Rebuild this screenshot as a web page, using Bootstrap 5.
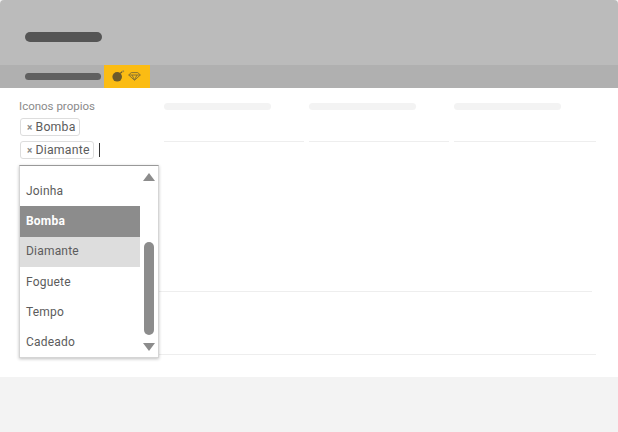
<!DOCTYPE html>
<html lang="es">
<head>
  <meta charset="UTF-8">
  <title>Iconos propios</title>
  <link href="https://cdn.jsdelivr.net/npm/bootstrap@5.3.0/dist/css/bootstrap.min.css" rel="stylesheet">
  <style>
    html, body { height: 100%; }
    body { background: #f3f3f3; font-family: Roboto, "Liberation Sans", sans-serif; font-size: 12px; color: #5c5c5c; overflow: hidden; }
    .page { width: 618px; height: 432px; }
    .top-band { height: 65px; background: #bbb; border-radius: 4px 4px 0 0; padding: 32px 0 0 25px; }
    .top-pill { width: 77px; height: 10px; border-radius: 5px; background: #555; }
    .sub-band { height: 23px; background: #b0b0b0; padding-left: 25px; }
    .sub-pill { width: 76px; height: 7px; border-radius: 4px; background: #606060; }
    .icon-tab { width: 46px; height: 23px; margin-left: 3px; background: #fbbc13; gap: 3px; padding-left: 8px; }
    .main-area { height: 289px; background: #fff; position: relative; padding: 10px 0 0 19px; }
    .field-col { width: 140px; }
    .field-label { color: #8a8a8a; font-size: 11.5px; line-height: 16px; margin-bottom: 4px; }
    .tag-line { height: 23px; }
    .tag-box { height: 18px; padding: 0 3px 0 6px; border: 1px solid #ddd; border-radius: 3px; margin-left: 1px; font-size: 12.3px; line-height: 16px; color: #5c5c5c; letter-spacing: .2px; }
    .tag-x { font-size: 10px; color: #888; margin-right: 3px; font-weight: 700; }
    .caret-bar { width: 1px; height: 14px; margin-top: 2px; background: #333; margin-left: 5px; }
    .skel-row { margin-left: 5px; }
    .skel-col { width: 140px; margin-right: 5px; height: 44px; padding-top: 5px; border-bottom: 1px solid #eee; }
    .skel-col:last-child { width: 142px; margin-right: 0; }
    .skel-pill { width: 107px; height: 7px; border-radius: 4px; background: #f3f3f3; }
    .rule-a, .rule-b { position: absolute; left: 159px; height: 1px; background: #eee; }
    .rule-a { top: 203px; width: 433px; }
    .rule-b { top: 266px; width: 437px; }
    .pick-menu { position: absolute; left: 19px; top: 77px; width: 140px; height: 193px; background: #fff; border: 1px solid #d5d5d5; border-top-color: #999; box-shadow: 0 1px 3px rgba(0,0,0,.25); overflow: hidden; }
    .pick-list { width: 120px; margin-top: 10px; }
    .pick-item { height: 30.3px; line-height: 30px; padding-left: 6px; color: #5c5c5c; font-size: 12px; letter-spacing: .2px; }
    .pick-item.is-on { background: #8c8c8c; color: #fff; font-weight: 700; }
    .pick-item.is-hover { background: #ddd; line-height: 28px; }
    .scroll-thumb { position: absolute; left: 124px; top: 76px; width: 10px; height: 93px; border-radius: 5px; background: #8c8c8c; }
    .arrow-up, .arrow-down { position: absolute; left: 123px; width: 0; height: 0; border-left: 6px solid transparent; border-right: 6px solid transparent; }
    .arrow-up { top: 7px; border-bottom: 8px solid #8c8c8c; }
    .arrow-down { top: 177px; border-top: 8px solid #8c8c8c; }
    .bottom-band { height: 55px; background: #f3f3f3; }
  </style>
</head>
<body>
  <div class="page">
    <div class="top-band"><div class="top-pill"></div></div>
    <div class="sub-band d-flex align-items-center">
      <div class="sub-pill"></div>
      <div class="icon-tab d-flex align-items-center">
        <svg width="13" height="13" viewBox="0 0 13 13"><circle cx="5.2" cy="6.8" r="4.8" fill="#6b5a2c"/><path d="M8.3 3.4 L10 1.8" stroke="#6b5a2c" stroke-width="1.2"/><circle cx="11.2" cy="1.2" r="1" fill="#a98d3a"/></svg>
        <svg width="13" height="9" viewBox="0 0 13 9"><path d="M3.2 .6 H9.8 L12.3 3 L6.5 8.3 L.7 3 Z M.7 3 H12.3 M4 3 L6.5 8 L9 3" fill="none" stroke="#8a7330" stroke-width="1"/></svg>
      </div>
    </div>
    <div class="main-area">
      <div class="d-flex">
        <div class="field-col">
          <div class="field-label">Iconos propios</div>
          <div class="tag-line d-flex"><span class="tag-box"><span class="tag-x">×</span>Bomba</span></div>
          <div class="tag-line d-flex"><span class="tag-box"><span class="tag-x">×</span>Diamante</span><span class="caret-bar"></span></div>
        </div>
        <div class="skel-row d-flex">
          <div class="skel-col"><div class="skel-pill"></div></div>
          <div class="skel-col"><div class="skel-pill"></div></div>
          <div class="skel-col"><div class="skel-pill"></div></div>
        </div>
      </div>
      <div class="rule-a"></div>
      <div class="rule-b"></div>
      <div class="pick-menu">
        <div class="pick-list">
          <div class="pick-item">Joinha</div>
          <div class="pick-item is-on">Bomba</div>
          <div class="pick-item is-hover">Diamante</div>
          <div class="pick-item">Foguete</div>
          <div class="pick-item">Tempo</div>
          <div class="pick-item">Cadeado</div>
        </div>
        <div class="arrow-up"></div>
        <div class="scroll-thumb"></div>
        <div class="arrow-down"></div>
      </div>
    </div>
    <div class="bottom-band"></div>
  </div>
  <script src="https://cdn.jsdelivr.net/npm/bootstrap@5.3.0/dist/js/bootstrap.bundle.min.js"></script>
</body>
</html>
